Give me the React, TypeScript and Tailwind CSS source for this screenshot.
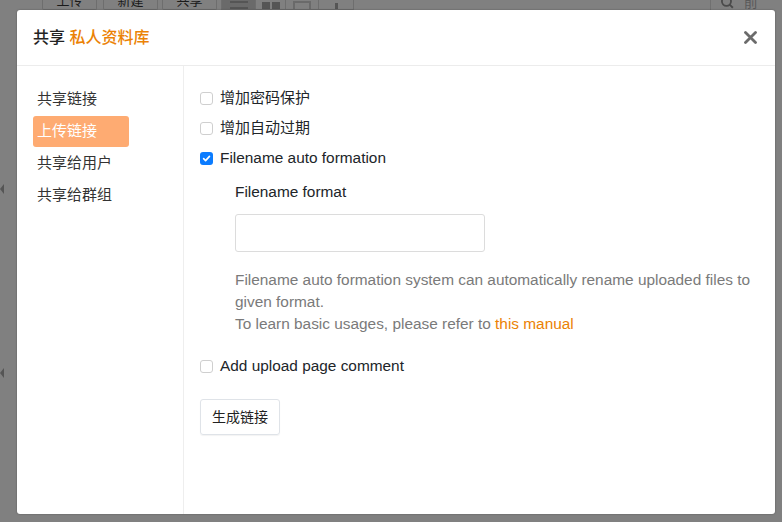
import React from "react";

const font = { fontFamily: '"Liberation Sans", "Noto Sans CJK SC", Arial, sans-serif' };

function Checkbox({ checked = false }: { checked?: boolean }) {
  if (checked) {
    return (
      <span className="w-[13px] h-[13px] rounded-[3px] bg-[#0b7cff] flex items-center justify-center shrink-0">
        <svg width="9" height="9" viewBox="0 0 10 10">
          <path d="M1.8 5.2 L4 7.4 L8.3 2.6" stroke="white" strokeWidth="1.8" fill="none" strokeLinecap="round" strokeLinejoin="round" />
        </svg>
      </span>
    );
  }
  return <span className="w-[13px] h-[13px] rounded-[3px] border border-[#cfcfcf] bg-white shrink-0" />;
}

function Row({ checked, label, en }: { checked?: boolean; label: string; en?: boolean }) {
  return (
    <div className="h-[30px] flex items-center gap-[7px]">
      <Checkbox checked={checked} />
      <span className={en ? "text-[15.4px] text-[#212529]" : "text-[15px] text-[#212529]"}>{label}</span>
    </div>
  );
}

export default function App() {
  const nav = ["共享链接", "上传链接", "共享给用户", "共享给群组"];
  return (
    <div className="w-[782px] h-[522px] relative overflow-hidden bg-[#808080]" style={font}>
      {/* background page (dimmed) */}
      <div className="h-[10px] overflow-hidden flex items-end relative">
        <div className="flex items-end h-full pl-[42px]">
          <div className="w-[55px] h-[14px] border border-[#6e6e6e] border-t-0 rounded-b-[2px] flex items-end justify-center text-[13px] leading-[16px] text-[#1a1a1a]">上传</div>
          <div className="w-[6px]" />
          <div className="w-[55px] h-[14px] border border-[#6e6e6e] border-t-0 rounded-b-[2px] flex items-end justify-center text-[13px] leading-[16px] text-[#1a1a1a]">新建</div>
          <div className="w-[4px]" />
          <div className="w-[55px] h-[14px] border border-[#6e6e6e] border-t-0 rounded-b-[2px] flex items-end justify-center text-[13px] leading-[16px] text-[#1a1a1a]">共享</div>
          <div className="w-[4px]" />
          <div className="flex h-[14px] border border-[#6e6e6e] border-t-0">
            <div className="w-[33px] bg-[#6a6a6a] flex items-end justify-center">
              <div className="w-[18px] h-[8px] border-t-2 border-b-2 border-[#555]" />
            </div>
            <div className="w-[30px] flex items-end justify-center gap-[2px] border-l border-[#6e6e6e]">
              <div className="w-[8px] h-[7px] bg-[#555]" />
              <div className="w-[8px] h-[7px] bg-[#555]" />
            </div>
            <div className="w-[33px] flex items-end justify-center border-l border-[#6e6e6e]">
              <div className="w-[18px] h-[8px] border-2 border-b-0 border-[#6a6a6a]" />
            </div>
            <div className="w-[35px] flex items-end justify-center border-l border-[#6e6e6e]">
              <div className="w-[3px] h-[6px] bg-[#555]" />
            </div>
          </div>
        </div>
        <div className="ml-auto flex items-end h-full w-[72px] border-l border-[#707070] pl-[10px] gap-[10px]">
          <svg width="14" height="10" viewBox="0 0 14 10">
            <circle cx="6" cy="1" r="5" stroke="#4a4a4a" strokeWidth="2" fill="none" />
            <path d="M9.5 4.5 L13 8" stroke="#4a4a4a" strokeWidth="2" />
          </svg>
          <span className="text-[14px] leading-[16px] text-[#5a5a5a]">在当前</span>
        </div>
      </div>
      <div className="absolute left-0 top-[184px] w-0 h-0 border-y-[5px] border-y-transparent border-r-[4px] border-r-[#555]" />
      <div className="absolute left-0 top-[368px] w-0 h-0 border-y-[5px] border-y-transparent border-r-[4px] border-r-[#555]" />

      {/* modal */}
      <div className="absolute left-[17px] top-[10px] w-[758px] h-[504px] bg-white rounded-[3px] flex flex-col shadow-[0_0_2px_rgba(0,0,0,0.35)]">
        <div className="h-[56px] shrink-0 px-4 flex items-center justify-between border-b border-[#ececec]">
          <div className="text-[16px] font-medium text-[#222]">
            共享 <span className="text-[#eb8205]">私人资料库</span>
          </div>
          <svg width="13" height="13" viewBox="0 0 13 13" className="mr-[2px]">
            <path d="M1.5 1.5 L11.5 11.5 M11.5 1.5 L1.5 11.5" stroke="#6b6b6b" strokeWidth="2.8" strokeLinecap="round" />
          </svg>
        </div>
        <div className="flex flex-1">
          <div className="w-[167px] shrink-0 border-r border-[#eeeeee] pt-[18px] px-4">
            {nav.map((n, i) => (
              <div
                key={n}
                className={
                  i === 1
                    ? "h-[31px] mb-px w-[96px] px-1 flex items-center rounded-[3px] bg-[#feab72] text-white text-[15px]"
                    : "h-[31px] mb-px px-1 flex items-center text-[#333] text-[15px]"
                }
              >
                {n}
              </div>
            ))}
          </div>
          <div className="flex-1 pt-[17px] px-4">
            <Row label="增加密码保护" />
            <Row label="增加自动过期" />
            <Row checked en label="Filename auto formation" />
            <div className="pl-[35px]">
              <div className="mt-[8px] text-[15.4px] leading-[22px] text-[#212529]">Filename format</div>
              <div className="mt-[11px] w-[250px] h-[38px] rounded-[3px] border border-[#dcdcdc]" />
              <div className="mt-[17px] text-[15.4px] leading-[22px] text-[#7a7a7a]">
                <div className="whitespace-nowrap">Filename auto formation system can automatically rename uploaded files to</div>
                <div>given format.</div>
                <div>
                  To learn basic usages, please refer to <span className="text-[#eb8205]">this manual</span>
                </div>
              </div>
            </div>
            <div className="mt-[16px]">
              <Row en label="Add upload page comment" />
            </div>
            <div className="mt-[18px] w-[80px] h-[36px] rounded-[3px] border border-[#dfe3e8] shadow-[0_1px_1px_rgba(0,0,0,0.05)] flex items-center justify-center text-[14px] text-[#222]">
              生成链接
            </div>
          </div>
        </div>
      </div>
    </div>
  );
}
